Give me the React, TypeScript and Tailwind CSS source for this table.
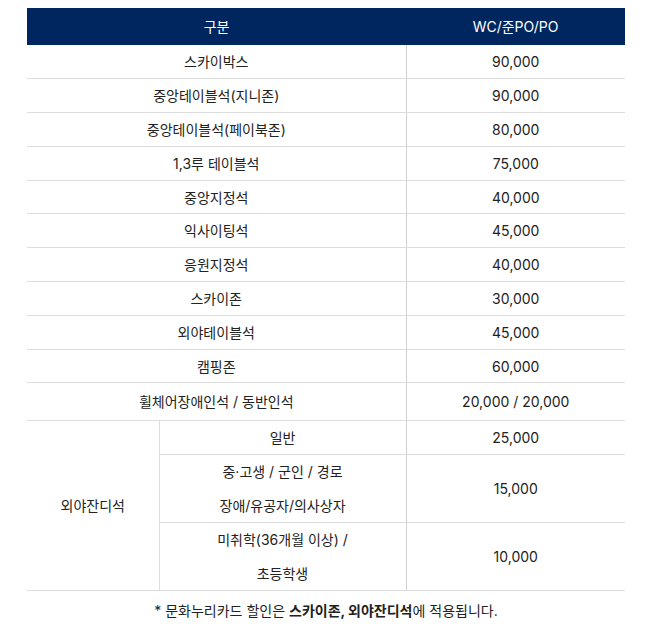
const rows: [string, string][] = [
  ["스카이박스", "90,000"],
  ["중앙테이블석(지니존)", "90,000"],
  ["중앙테이블석(페이북존)", "80,000"],
  ["1,3루 테이블석", "75,000"],
  ["중앙지정석", "40,000"],
  ["익사이팅석", "45,000"],
  ["응원지정석", "40,000"],
  ["스카이존", "30,000"],
  ["외야테이블석", "45,000"],
  ["캠핑존", "60,000"],
];

const cell = "border-b border-[#dcdcdc] text-center align-middle";

export default function App() {
  return (
    <div
      className="bg-white w-[663px] h-[632px] pt-2 pl-[27px] text-[14px] text-[#222]"
      style={{ fontFamily: 'Inter, "Noto Sans CJK KR", "Noto Sans", sans-serif' }}
    >
      <table className="w-[598px] border-collapse table-fixed">
        <colgroup>
          <col className="w-[132px]" />
          <col className="w-[247px]" />
          <col className="w-[219px]" />
        </colgroup>
        <thead>
          <tr className="bg-[#00265f] text-white h-[37px]">
            <th colSpan={2} className="font-normal text-center">구분</th>
            <th className="font-normal text-center">WC/준PO/PO</th>
          </tr>
        </thead>
        <tbody>
          {rows.map(([name, price]) => (
            <tr key={name} className="h-[33.8px]">
              <td colSpan={2} className={cell}>{name}</td>
              <td className={`${cell} border-l border-l-[#cfcfcf]`}>{price}</td>
            </tr>
          ))}
          <tr className="h-[38px]">
            <td colSpan={2} className={cell}>휠체어장애인석 / 동반인석</td>
            <td className={`${cell} border-l border-l-[#cfcfcf]`}>20,000 / 20,000</td>
          </tr>
          <tr className="h-[34px]">
            <td rowSpan={3} className={`${cell} border-r border-r-[#dcdcdc]`}>외야잔디석</td>
            <td className={cell}>일반</td>
            <td className={`${cell} border-l border-l-[#cfcfcf]`}>25,000</td>
          </tr>
          <tr>
            <td className={`${cell} leading-[33.5px]`}>
              중·고생 / 군인 / 경로
              <br />
              장애/유공자/의사상자
            </td>
            <td className={`${cell} border-l border-l-[#cfcfcf]`}>15,000</td>
          </tr>
          <tr>
            <td className={`${cell} leading-[33.5px]`}>
              미취학(36개월 이상) /
              <br />
              초등학생
            </td>
            <td className={`${cell} border-l border-l-[#cfcfcf]`}>10,000</td>
          </tr>
        </tbody>
      </table>
      <p className="w-[598px] text-center mt-[9px]">
        * 문화누리카드 할인은 <b className="font-bold">스카이존, 외야잔디석</b>에 적용됩니다.
      </p>
    </div>
  );
}
